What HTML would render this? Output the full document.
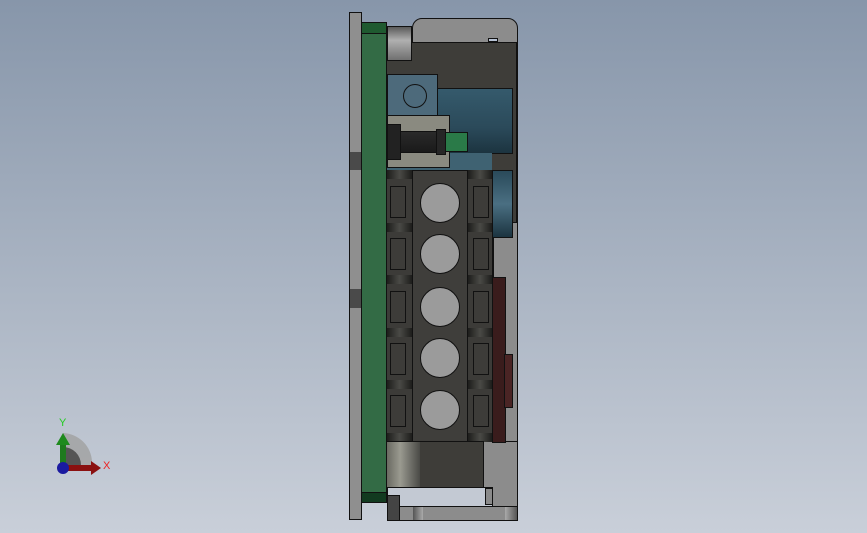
<!DOCTYPE html>
<html><head><style>
body{margin:0;width:867px;height:533px;overflow:hidden;background:linear-gradient(#8796aa,#c9cfd9);position:relative;font-family:"Liberation Sans",sans-serif}
div{position:absolute;box-sizing:border-box}
.b{border:1px solid #111}
.sq{width:16px;height:32px;border:1px solid #111;background:#3d3c39}
.c{width:40px;height:40px;border-radius:50%;background:#9b9b9b;border:1px solid #111;left:420px}
.g{height:9px;background:linear-gradient(90deg,#1d1d1b,#4a4a46,#1d1d1b)}
</style></head><body>
<!-- housing -->
<div class="b" style="left:412px;top:18px;width:106px;height:503px;background:#8c8c8c;border-radius:10px 10px 0 0"></div>
<div class="b" style="left:386px;top:42px;width:131px;height:400px;background:#3e3d39"></div>
<div class="b" style="left:488px;top:38px;width:10px;height:4px;background:#b7c2d4"></div>
<div class="b" style="left:493px;top:222px;width:25px;height:220px;background:#8c8c8c"></div>
<!-- left plate -->
<div class="b" style="left:349px;top:12px;width:13px;height:508px;background:#8f8f8f"></div>
<div style="left:350px;top:152px;width:11px;height:18px;background:#4a4a4a"></div>
<div style="left:350px;top:289px;width:11px;height:19px;background:#4a4a4a"></div>
<!-- pcb -->
<div class="b" style="left:361px;top:22px;width:26px;height:481px;background:#336b45"></div>
<div class="b" style="left:361px;top:22px;width:26px;height:12px;background:#1f5a30"></div>
<div class="b" style="left:361px;top:492px;width:26px;height:11px;background:#123a20"></div>
<!-- top cylinder -->
<div class="b" style="left:387px;top:26px;width:25px;height:35px;background:linear-gradient(#5a5a5a,#b0b0b0 40%,#707070)"></div>
<!-- blue block -->
<div class="b" style="left:387px;top:74px;width:51px;height:45px;background:#4d6a7b"></div>
<div style="left:403px;top:84px;width:24px;height:24px;border:1.5px solid #111;border-radius:50%"></div>
<div class="b" style="left:437px;top:88px;width:76px;height:66px;background:linear-gradient(#355a6c,#2b4a5a 60%,#1c3440)"></div>
<div class="b" style="left:487px;top:170px;width:26px;height:68px;background:linear-gradient(#2a4a5a,#4a6f82 50%,#1c3440)"></div>
<div style="left:387px;top:153px;width:105px;height:18px;background:#3f6272"></div>
<!-- beige + screw -->
<div class="b" style="left:387px;top:115px;width:63px;height:53px;background:#8a8a80"></div>
<div class="b" style="left:387px;top:124px;width:14px;height:36px;background:#222"></div>
<div class="b" style="left:400px;top:131px;width:37px;height:22px;background:linear-gradient(#2a2a2a,#1a1a1a)"></div>
<div class="b" style="left:436px;top:129px;width:10px;height:26px;background:#262626"></div>
<div class="b" style="left:445px;top:132px;width:23px;height:20px;background:#2a7a48"></div>
<!-- terminal block -->
<div class="b" style="left:386px;top:170px;width:107px;height:272px;background:#3c3b38"></div>
<div class="b" style="left:412px;top:170px;width:56px;height:272px;background:#3f3e3b"></div>
<div class="g" style="left:387px;top:170px;width:25px"></div><div class="g" style="left:468px;top:170px;width:24px"></div>
<div class="g" style="left:387px;top:223px;width:25px"></div><div class="g" style="left:468px;top:223px;width:24px"></div>
<div class="g" style="left:387px;top:275px;width:25px"></div><div class="g" style="left:468px;top:275px;width:24px"></div>
<div class="g" style="left:387px;top:328px;width:25px"></div><div class="g" style="left:468px;top:328px;width:24px"></div>
<div class="g" style="left:387px;top:380px;width:25px"></div><div class="g" style="left:468px;top:380px;width:24px"></div>
<div class="g" style="left:387px;top:433px;width:25px"></div><div class="g" style="left:468px;top:433px;width:24px"></div>
<div class="sq" style="left:390px;top:186px"></div><div class="sq" style="left:473px;top:186px"></div>
<div class="sq" style="left:390px;top:238px"></div><div class="sq" style="left:473px;top:238px"></div>
<div class="sq" style="left:390px;top:291px"></div><div class="sq" style="left:473px;top:291px"></div>
<div class="sq" style="left:390px;top:343px"></div><div class="sq" style="left:473px;top:343px"></div>
<div class="sq" style="left:390px;top:395px"></div><div class="sq" style="left:473px;top:395px"></div>
<div class="c" style="top:183px"></div><div class="c" style="top:234px"></div><div class="c" style="top:287px"></div><div class="c" style="top:338px"></div><div class="c" style="top:390px"></div>
<!-- red -->
<div class="b" style="left:492px;top:277px;width:14px;height:166px;background:#3a1c1c"></div>
<div class="b" style="left:504px;top:354px;width:9px;height:54px;background:#4a2424"></div>
<!-- lower -->
<div class="b" style="left:386px;top:441px;width:98px;height:47px;background:#3e3d39"></div>
<div style="left:387px;top:442px;width:33px;height:45px;background:linear-gradient(90deg,#6a6a62,#9a9a90 40%,#4a4a46)"></div>
<div class="b" style="left:387px;top:487px;width:106px;height:20px;background:#c3c9d3"></div>
<div class="b" style="left:485px;top:488px;width:8px;height:17px;background:#8a8a8a"></div>
<div class="b" style="left:387px;top:506px;width:131px;height:15px;background:#8c8c8c"></div>
<div class="b" style="left:387px;top:495px;width:13px;height:26px;background:#444"></div>
<div style="left:413px;top:507px;width:10px;height:13px;background:linear-gradient(90deg,#555,#aaa)"></div>
<div style="left:505px;top:507px;width:12px;height:13px;background:linear-gradient(90deg,#aaa,#555)"></div>
<!-- triad -->
<svg style="position:absolute;left:45px;top:410px" width="70" height="70">
<path d="M18 60 L18 23 A30 30 0 0 1 47 52 L47 60Z" fill="#a0a0a0" opacity=".8"/>
<path d="M18 60 L18 37 A18 18 0 0 1 36 55 L36 60Z" fill="#555"/>
<rect x="15" y="34" width="6" height="24" fill="#1e7a1e"/><path d="M11 35 L18 23 L25 35Z" fill="#1e8a1e"/>
<rect x="20" y="55" width="28" height="6" fill="#8a1010"/><path d="M46 51 L56 58 L46 65Z" fill="#8a1010"/>
<circle cx="18" cy="58" r="6" fill="#1a1aa0"/>
<text x="14" y="16" font-size="11" fill="#2c2">Y</text>
<text x="58" y="59" font-size="11" fill="#e22">X</text>
</svg>
</body></html>
